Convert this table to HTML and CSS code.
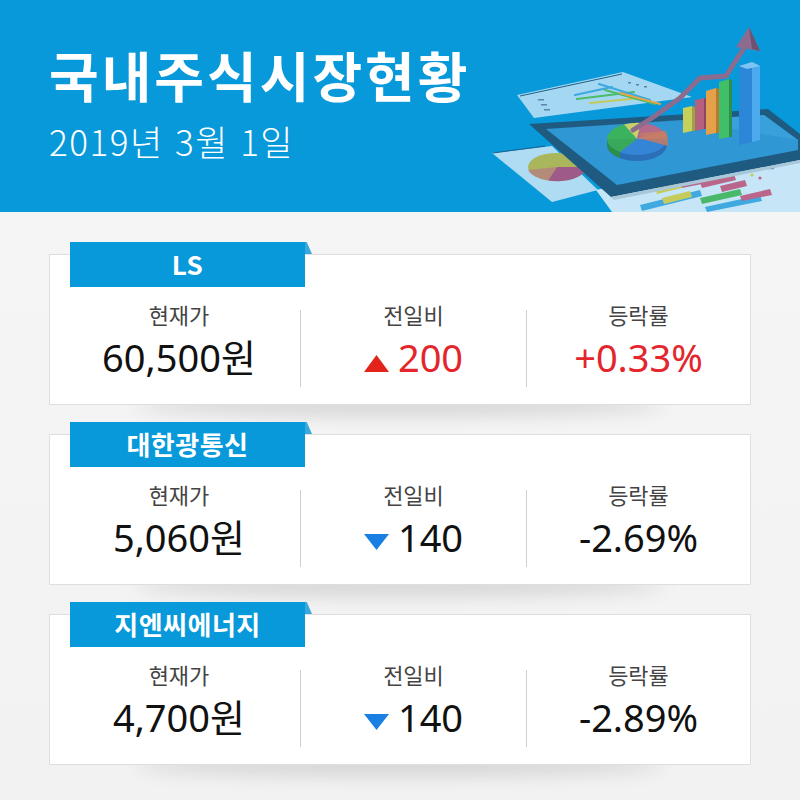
FILE: index.html
```html
<!DOCTYPE html>
<html lang="ko">
<head>
<meta charset="utf-8">
<title>국내주식시장현황</title>
<link rel="stylesheet" href="styles.css">
</head>
<body>
<header class="hero">
  <div class="hero-text">
    <h1 class="title">국내주식시장현황</h1>
    <p class="date">2019년 3월 1일</p>
  </div>
  <svg class="hero-art" viewBox="480 0 320 212" width="320" height="212" aria-hidden="true">
    <!-- back paper -->
    <polygon points="517,95 623,72 692,97 534,118" fill="#bfe2f4" opacity="0.85"/>
    <line x1="520" y1="96" x2="622" y2="74" stroke="#1e5f8a" stroke-width="1"/>
    <g stroke-width="2.2" stroke-linecap="round">
      <line x1="575" y1="95" x2="612" y2="87" stroke="#3da9e0"/>
      <line x1="577" y1="99" x2="634" y2="92" stroke="#4cbb6a"/>
      <line x1="590" y1="103" x2="640" y2="98" stroke="#c3c95a"/>
      <line x1="599" y1="84" x2="650" y2="100" stroke="#3da9e0"/>
      <line x1="605" y1="90" x2="655" y2="104" stroke="#4cbb6a"/>
      <line x1="620" y1="93" x2="660" y2="104" stroke="#e4a54a"/>
    </g>
    <g fill="#5a86a8">
      <rect x="538" y="99" width="6" height="1.5"/>
      <rect x="541" y="104" width="6" height="1.5"/>
      <rect x="544" y="109" width="6" height="1.5"/>
      <rect x="628" y="82" width="3" height="1.5"/>
      <rect x="636" y="84" width="3" height="1.5"/>
      <rect x="644" y="86" width="3" height="1.5"/>
    </g>
    <!-- left paper with pie -->
    <polygon points="492,153 552,146 598,190 552,202" fill="#c2e3f4" opacity="0.9"/>
    <line x1="493" y1="153" x2="545" y2="146" stroke="#1e5f8a" stroke-width="1"/>
    <ellipse cx="557" cy="167" rx="29" ry="14" fill="#a9b65c"/>
    <path d="M557,167 L586,167 A29,14 0 0 1 548,180.5 Z" fill="#9e5a88"/>
    <path d="M557,167 L548,180.5 A29,14 0 0 1 528,170 Z" fill="#b96f8a" opacity="0.6"/>
    <!-- lower right paper -->
    <polygon points="596,190 776,150 800,160 800,212 612,212" fill="#c6e6f7"/>
    <g>
      <polygon points="640,205 700,190 702,196 642,211" fill="#3fa9e0"/>
      <polygon points="662,198 690,191 692,197 664,204" fill="#c6cc5c"/>
      <polygon points="700,182 734,174 736,180 702,188" fill="#b9668a"/>
      <polygon points="655,188 680,182 682,188 657,194" fill="#c6cc5c"/>
      <polygon points="680,182 700,178 702,184 682,188" fill="#b9668a"/>
      <polygon points="700,198 740,189 742,195 702,204" fill="#4ab86a"/>
      <polygon points="720,186 745,180 747,186 722,192" fill="#b9668a"/>
      <polygon points="705,207 760,195 762,201 707,212" fill="#3fa9e0"/>
      <polygon points="740,196 770,189 772,195 742,201" fill="#b9668a"/>
    </g>
    <g>
      <circle cx="737" cy="168" r="1.6" fill="#3fa9e0"/>
      <circle cx="745" cy="172" r="1.6" fill="#3fa9e0"/>
      <circle cx="752" cy="175" r="1.6" fill="#c6cc5c"/>
      <circle cx="760" cy="178" r="1.6" fill="#b9668a"/>
      <rect x="752" y="160" width="8" height="1.2" fill="#5a86a8"/>
      <rect x="760" y="164" width="8" height="1.2" fill="#5a86a8"/>
      <rect x="766" y="168" width="8" height="1.2" fill="#5a86a8"/>
    </g>
    <!-- tablet -->
    <polygon points="529,124 768,109 800,134 800,160 611,197" fill="#1f5b80"/>
    <polygon points="611,197 800,160 800,163 614,200" fill="#a8c8da"/>
    <polygon points="546,129 764,115 798,140 798,150 617,185" fill="#2f98d4"/>
    <polygon points="546,129 764,115 798,140 680,120" fill="#3fa6df" opacity="0.6"/>
    <!-- pie on tablet -->
    <ellipse cx="637" cy="145" rx="30" ry="16" fill="#2a6fb8"/>
    <ellipse cx="637" cy="139" rx="30" ry="16" fill="#3485d6"/>
    <path d="M637,139 L607,139 A30,16 0 0 1 624,124.5 Z" fill="#3ab25e"/>
    <path d="M607,139 L607,145 A30,16 0 0 0 620,158 L620,152 A30,16 0 0 1 607,139 Z" fill="#2b8f4a"/>
    <path d="M637,139 L607,139 A30,16 0 0 0 620,152 Z" fill="#38a85a"/>
    <path d="M637,139 L624,124.5 A30,16 0 0 1 641,123 Z" fill="#c8cf66"/>
    <path d="M637,139 L641,123 A30,16 0 0 1 663,131 Z" fill="#b56a8c"/>
    <path d="M637,139 L663,131 A30,16 0 0 1 667,139 Z" fill="#d08a6c"/>
    <path d="M640,133 L666,131 L668,140 L668,146 L642,139 Z" fill="#c57a64" opacity="0.85"/>
    <!-- bars -->
    <polygon points="683,108 692,106 692,131 683,133" fill="#c6d05a"/>
    <polygon points="692,106 695,107 695,131 692,131" fill="#9aa444"/>
    <polygon points="695,100 704,98 704,129 695,131" fill="#b5607f"/>
    <polygon points="704,98 707,99 707,129 704,129" fill="#8a4663"/>
    <polygon points="706,91 716,88 716,133 706,135" fill="#e3a24a"/>
    <polygon points="716,88 719,89 719,133 716,133" fill="#b47a30"/>
    <polygon points="719,82 729,79 729,137 719,139" fill="#41bf68"/>
    <polygon points="729,79 732,80 732,137 729,137" fill="#2c8f4c"/>
    <polygon points="739,66 752,62 752,142 739,145" fill="#2d87d8"/>
    <polygon points="752,62 760,66 760,140 752,142" fill="#4eaaee"/>
    <polygon points="739,66 752,62 760,66 747,69" fill="#7cc4f4"/>
    <!-- arrow -->
    <polyline points="633,130 652,118 680,98 700,78 726,76 744,48" fill="none" stroke="#8c6c8e" stroke-width="5" stroke-linejoin="round" stroke-linecap="round"/>
    <polygon points="749,27 760,51 736,47" fill="#8c6c8e"/>
    <polygon points="749,27 760,51 752,49" fill="#6e5172"/>
  </svg>
</header>
<main class="list">
  <section class="card">
    <div class="tab">LS</div>
    <div class="stats">
      <div class="stat">
        <div class="label">현재가</div>
        <div class="value">60,500원</div>
      </div>
      <div class="stat">
        <div class="label">전일비</div>
        <div class="value up"><svg class="tri" viewBox="0 0 25 17" width="25" height="17"><polygon points="12.5,0 25,17 0,17" fill="#e3241b"/></svg>200</div>
      </div>
      <div class="stat">
        <div class="label">등락률</div>
        <div class="value up">+0.33%</div>
      </div>
    </div>
  </section>
  <section class="card">
    <div class="tab">대한광통신</div>
    <div class="stats">
      <div class="stat">
        <div class="label">현재가</div>
        <div class="value">5,060원</div>
      </div>
      <div class="stat">
        <div class="label">전일비</div>
        <div class="value"><svg class="tri down" viewBox="0 0 25 16" width="25" height="16"><polygon points="0,0 25,0 12.5,16" fill="#1a7fe3"/></svg>140</div>
      </div>
      <div class="stat">
        <div class="label">등락률</div>
        <div class="value">-2.69%</div>
      </div>
    </div>
  </section>
  <section class="card">
    <div class="tab">지엔씨에너지</div>
    <div class="stats">
      <div class="stat">
        <div class="label">현재가</div>
        <div class="value">4,700원</div>
      </div>
      <div class="stat">
        <div class="label">전일비</div>
        <div class="value"><svg class="tri down" viewBox="0 0 25 16" width="25" height="16"><polygon points="0,0 25,0 12.5,16" fill="#1a7fe3"/></svg>140</div>
      </div>
      <div class="stat">
        <div class="label">등락률</div>
        <div class="value">-2.89%</div>
      </div>
    </div>
  </section>
</main>
</body>
</html>
```
FILE: styles.css
```css
* { box-sizing: border-box; }
html, body {
  margin: 0;
  padding: 0;
}
body {
  width: 800px;
  height: 800px;
  overflow: hidden;
  background: #f4f4f4;
  font-family: "Noto Sans CJK KR", "Noto Sans", sans-serif;
}
.hero {
  height: 212px;
  background: #0899da;
  display: flex;
  justify-content: space-between;
  color: #fff;
}
.hero-text {
  padding: 43px 0 0 49px;
  white-space: nowrap;
}
.title {
  margin: 0;
  font-size: 54px;
  line-height: 64px;
  font-weight: 700;
  letter-spacing: 3px;
}
.date {
  margin: 14px 0 0;
  font-size: 35px;
  line-height: 40px;
  font-weight: 300;
  letter-spacing: 1.5px;
}
.hero-art {
  display: block;
  flex: none;
}
.list {
  position: relative;
  z-index: 0;
  padding: 42px 49px 0;
  background: linear-gradient(#f5f5f5, #f2f2f2);
  height: 588px;
}
.card {
  position: relative;
  height: 151px;
  margin-bottom: 29px;
  background: #fff;
  border: 1px solid #dedede;
}
.card::before {
  content: "";
  position: absolute;
  z-index: -1;
  left: 12%;
  right: 12%;
  bottom: 6px;
  height: 20px;
  border-radius: 50%;
  box-shadow: 0 16px 20px rgba(0, 0, 0, 0.15);
}
.tab {
  position: relative;
  width: 235px;
  height: 45px;
  margin: -13px 0 0 20px;
  background: #0899da;
  color: #fff;
  font-size: 26px;
  font-weight: 700;
  line-height: 44px;
  text-align: center;
  letter-spacing: 0.5px;
}
.tab::after {
  content: "";
  position: absolute;
  top: 0;
  left: 100%;
  width: 7px;
  height: 12px;
  background: #3aa7df;
  clip-path: polygon(0 0, 25% 0, 100% 100%, 0 100%);
}
.stats {
  display: grid;
  grid-template-columns: 242px 226px 1fr;
  padding-left: 8px;
  margin-top: 23px;
}
.stat {
  height: 77px;
  text-align: center;
}
.stat + .stat {
  border-left: 1px solid #cfcfcf;
}
.label {
  margin-top: -10px;
  font-size: 22px;
  line-height: 28px;
  color: #444;
}
.value {
  margin-top: 7px;
  font-family: "Noto Sans", "Noto Sans CJK KR", sans-serif;
  font-size: 38px;
  line-height: 44px;
  color: #111;
  letter-spacing: 0;
}
.value.up {
  color: #e3262c;
}
.tri {
  margin-right: 9px;
  vertical-align: 0;
}
.tri.down {
  vertical-align: 2px;
}
```
